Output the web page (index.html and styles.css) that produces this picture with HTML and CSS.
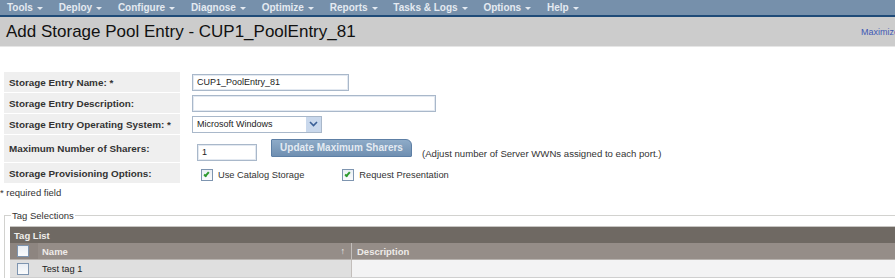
FILE: index.html
```html
<!DOCTYPE html>
<html lang="en">
    <head>
        <title>Add Storage Pool Entry</title>
        <meta charset="utf-8">
        <link rel="stylesheet" href="styles.css">
    </head>
    <body>
        <div class="pagina">
            <div class="menu">
                <span class="menu-item">Tools <i class="seta"></i></span>
                <span class="menu-item">Deploy <i class="seta"></i></span>
                <span class="menu-item">Configure <i class="seta"></i></span>
                <span class="menu-item">Diagnose <i class="seta"></i></span>
                <span class="menu-item">Optimize <i class="seta"></i></span>
                <span class="menu-item">Reports <i class="seta"></i></span>
                <span class="menu-item">Tasks &amp; Logs <i class="seta"></i></span>
                <span class="menu-item">Options <i class="seta"></i></span>
                <span class="menu-item">Help <i class="seta"></i></span>
            </div>

            <div class="titulo">
                <h1>Add Storage Pool Entry - CUP1_PoolEntry_81</h1>
                <a class="maximizar" href="#">Maximize</a>
            </div>

            <table class="form">
                <tr>
                    <td class="rotulo">Storage Entry Name: *</td>
                    <td class="campo"><input class="txt nome" type="text" value="CUP1_PoolEntry_81"></td>
                </tr>
                <tr>
                    <td class="rotulo">Storage Entry Description:</td>
                    <td class="campo"><input class="txt descricao" type="text"></td>
                </tr>
                <tr>
                    <td class="rotulo">Storage Entry Operating System: *</td>
                    <td class="campo">
                        <div class="select">
                            <span>Microsoft Windows</span>
                            <span class="select-seta">
                                <svg width="9" height="6" viewBox="0 0 9 6"><path d="M1 1 L4.5 4.5 L8 1" fill="none" stroke="#3a5f96" stroke-width="1.6"/></svg>
                            </span>
                        </div>
                    </td>
                </tr>
                <tr class="alta">
                    <td class="rotulo">Maximum Number of Sharers:</td>
                    <td class="campo">
                        <div class="linha-sharers">
                            <input class="txt sharers" type="text" value="1">
                            <button class="botao">Update Maximum Sharers</button>
                            <span class="dica">(Adjust number of Server WWNs assigned to each port.)</span>
                        </div>
                    </td>
                </tr>
                <tr>
                    <td class="rotulo">Storage Provisioning Options:</td>
                    <td class="campo">
                        <div class="opcoes">
                            <label class="opcao"><span class="check marcado"></span>Use Catalog Storage</label>
                            <label class="opcao"><span class="check marcado"></span>Request Presentation</label>
                        </div>
                    </td>
                </tr>
            </table>
            <div class="obrigatorio">* required field</div>

            <fieldset class="tags">
                <legend>Tag Selections</legend>
                <div class="tag-lista">Tag List</div>
                <div class="tag-cabecalho">
                    <div class="col-check"><span class="check"></span></div>
                    <div class="col-nome">Name <span class="ordem">&#8593;</span></div>
                    <div class="col-desc">Description</div>
                </div>
                <div class="tag-linha">
                    <div class="col-check"><span class="check"></span></div>
                    <div class="col-nome">Test tag 1</div>
                    <div class="col-desc"></div>
                </div>
            </fieldset>
        </div>
    </body>
</html>
```

FILE: styles.css
```css
*, *::before, *::after{
    box-sizing: border-box;
}

html, body{
    overflow: hidden;
}

body{
    margin: 0;
    padding: 0;
    background: white;
    font-family: "Liberation Sans", Arial, sans-serif;
    color: #333;
}

.pagina{
    width: 930px;
}

/* barra de menu */
.menu{
    height: 17px;
    background: #7690ab;
    border-bottom: 2px solid #1f4b78;
    display: flex;
    align-items: center;
    padding-left: 7px;
}

.menu-item{
    font-size: 10px;
    font-weight: bold;
    color: #e4eaf1;
    margin-right: 15.8px;
    display: flex;
    align-items: center;
    white-space: nowrap;
}

.seta{
    display: inline-block;
    width: 0;
    height: 0;
    margin-left: 4px;
    margin-top: 1px;
    border-left: 3px solid transparent;
    border-right: 3px solid transparent;
    border-top: 3px solid #e4eaf1;
}

/* titulo */
.titulo{
    height: 30px;
    background: #cccccc;
    border-bottom: 1px solid #e6e6e6;
    display: flex;
    align-items: center;
    justify-content: space-between;
    padding: 1px 31px 0 6px;
}

.titulo h1{
    margin: 0;
    font-size: 17px;
    font-weight: normal;
    color: #111;
}

.maximizar{
    font-size: 9px;
    color: #3f59b5;
    text-decoration: none;
}

/* formulario */
.form{
    margin: 24px 0 0 2px;
    border-collapse: separate;
    border-spacing: 2px 1px;
}

.form td{
    padding: 0;
    height: 20px;
}

.rotulo{
    width: 176px;
    background: #efefef;
    font-size: 9.9px;
    font-weight: bold;
    padding-left: 5px !important;
    color: #333;
}

.form .alta td{
    height: 27px;
    padding-top: 2px !important;
}

.form .alta .rotulo{
    padding-top: 0 !important;
}

.campo{
    padding-left: 10px !important;
}

.txt{
    display: block;
    height: 17px;
    border: 1px solid #a9b8ca;
    box-shadow: inset 0 0 0 1px #e3e9f1;
    font-family: "Liberation Sans", Arial, sans-serif;
    font-size: 9px;
    color: #222;
    padding: 0 4px;
    outline: none;
}

.nome{
    width: 157px;
}

.descricao{
    width: 244px;
}

.select{
    width: 130px;
    height: 17px;
    border: 1px solid #a9b8ca;
    display: flex;
    align-items: center;
    justify-content: space-between;
    font-size: 9px;
    color: #222;
    padding-left: 4px;
}

.select-seta{
    width: 15px;
    height: 15px;
    background: #c9d8ec;
    display: flex;
    align-items: center;
    justify-content: center;
}

.linha-sharers{
    display: flex;
    align-items: flex-start;
}

.sharers{
    width: 60px;
    margin: 5px 0 0 5px;
}

.botao{
    margin-left: 14px;
    width: 141px;
    height: 18px;
    border: 1px solid #5d7fa5;
    border-radius: 1px 6px 1px 1px;
    background: linear-gradient(#8eabc8, #6f8fb1);
    color: #e3eaf2;
    font-family: "Liberation Sans", Arial, sans-serif;
    font-size: 10px;
    font-weight: bold;
    padding: 0;
}

.dica{
    margin: 9px 0 0 10px;
    font-size: 9.6px;
    color: #333;
}

.opcoes{
    display: flex;
    padding-left: 9px;
    padding-top: 3px;
}

.opcao{
    display: flex;
    align-items: center;
    font-size: 9.3px;
    color: #333;
    margin-right: 38px;
}

.check{
    display: inline-block;
    width: 12px;
    height: 12px;
    border: 1px solid #7e95b0;
    background: linear-gradient(#e9eef4, #fbfcfd);
    margin-right: 5px;
    position: relative;
}

.marcado::after{
    content: "";
    position: absolute;
    left: 3px;
    top: 1px;
    width: 3px;
    height: 6px;
    border-right: 2px solid #2e9a2e;
    border-bottom: 2px solid #2e9a2e;
    transform: rotate(40deg);
}

.obrigatorio{
    font-size: 9.5px;
    color: #333;
    margin-top: 3px;
}

/* tags */
.tags{
    margin: 12px 0 0 4px;
    padding: 5px 0 0 5px;
    border: 1px solid #d2d2cf;
    border-bottom: none;
}

.tags legend{
    font-size: 9.5px;
    color: #333;
    padding: 0 1px;
    margin-left: 1px;
}

.tag-lista{
    height: 17px;
    background: #6f6963;
    border-top: 1px solid #c8c6c3;
    color: #f0eeec;
    font-size: 9.5px;
    font-weight: bold;
    padding-left: 4px;
    display: flex;
    align-items: center;
}

.tag-cabecalho, .tag-linha{
    display: flex;
    height: 17px;
}

.tag-cabecalho{
    background: #958d88;
    color: #eeebe9;
    font-size: 9.5px;
    font-weight: bold;
    border-bottom: 1px solid #b7b2ae;
}

.tag-linha{
    height: 18px;
    font-size: 9.3px;
    color: #222;
    border-bottom: 1px solid #cfcfcf;
}

.col-check{
    width: 28px;
    display: flex;
    align-items: center;
    padding-left: 7px;
}

.tag-cabecalho .col-check{
    background: #8d8580;
}

.col-nome{
    width: 314px;
    display: flex;
    align-items: center;
    justify-content: space-between;
    padding: 0 6px 0 4px;
    border-right: 1px solid #c3bebb;
}

.tag-linha .col-check, .tag-linha .col-nome{
    background: #dfdfdf;
}

.col-desc{
    flex: 1;
    display: flex;
    align-items: center;
    padding-left: 5px;
}

.tag-linha .col-desc{
    background: #f3f3f4;
}

.ordem{
    font-weight: normal;
    font-size: 9px;
}
```
